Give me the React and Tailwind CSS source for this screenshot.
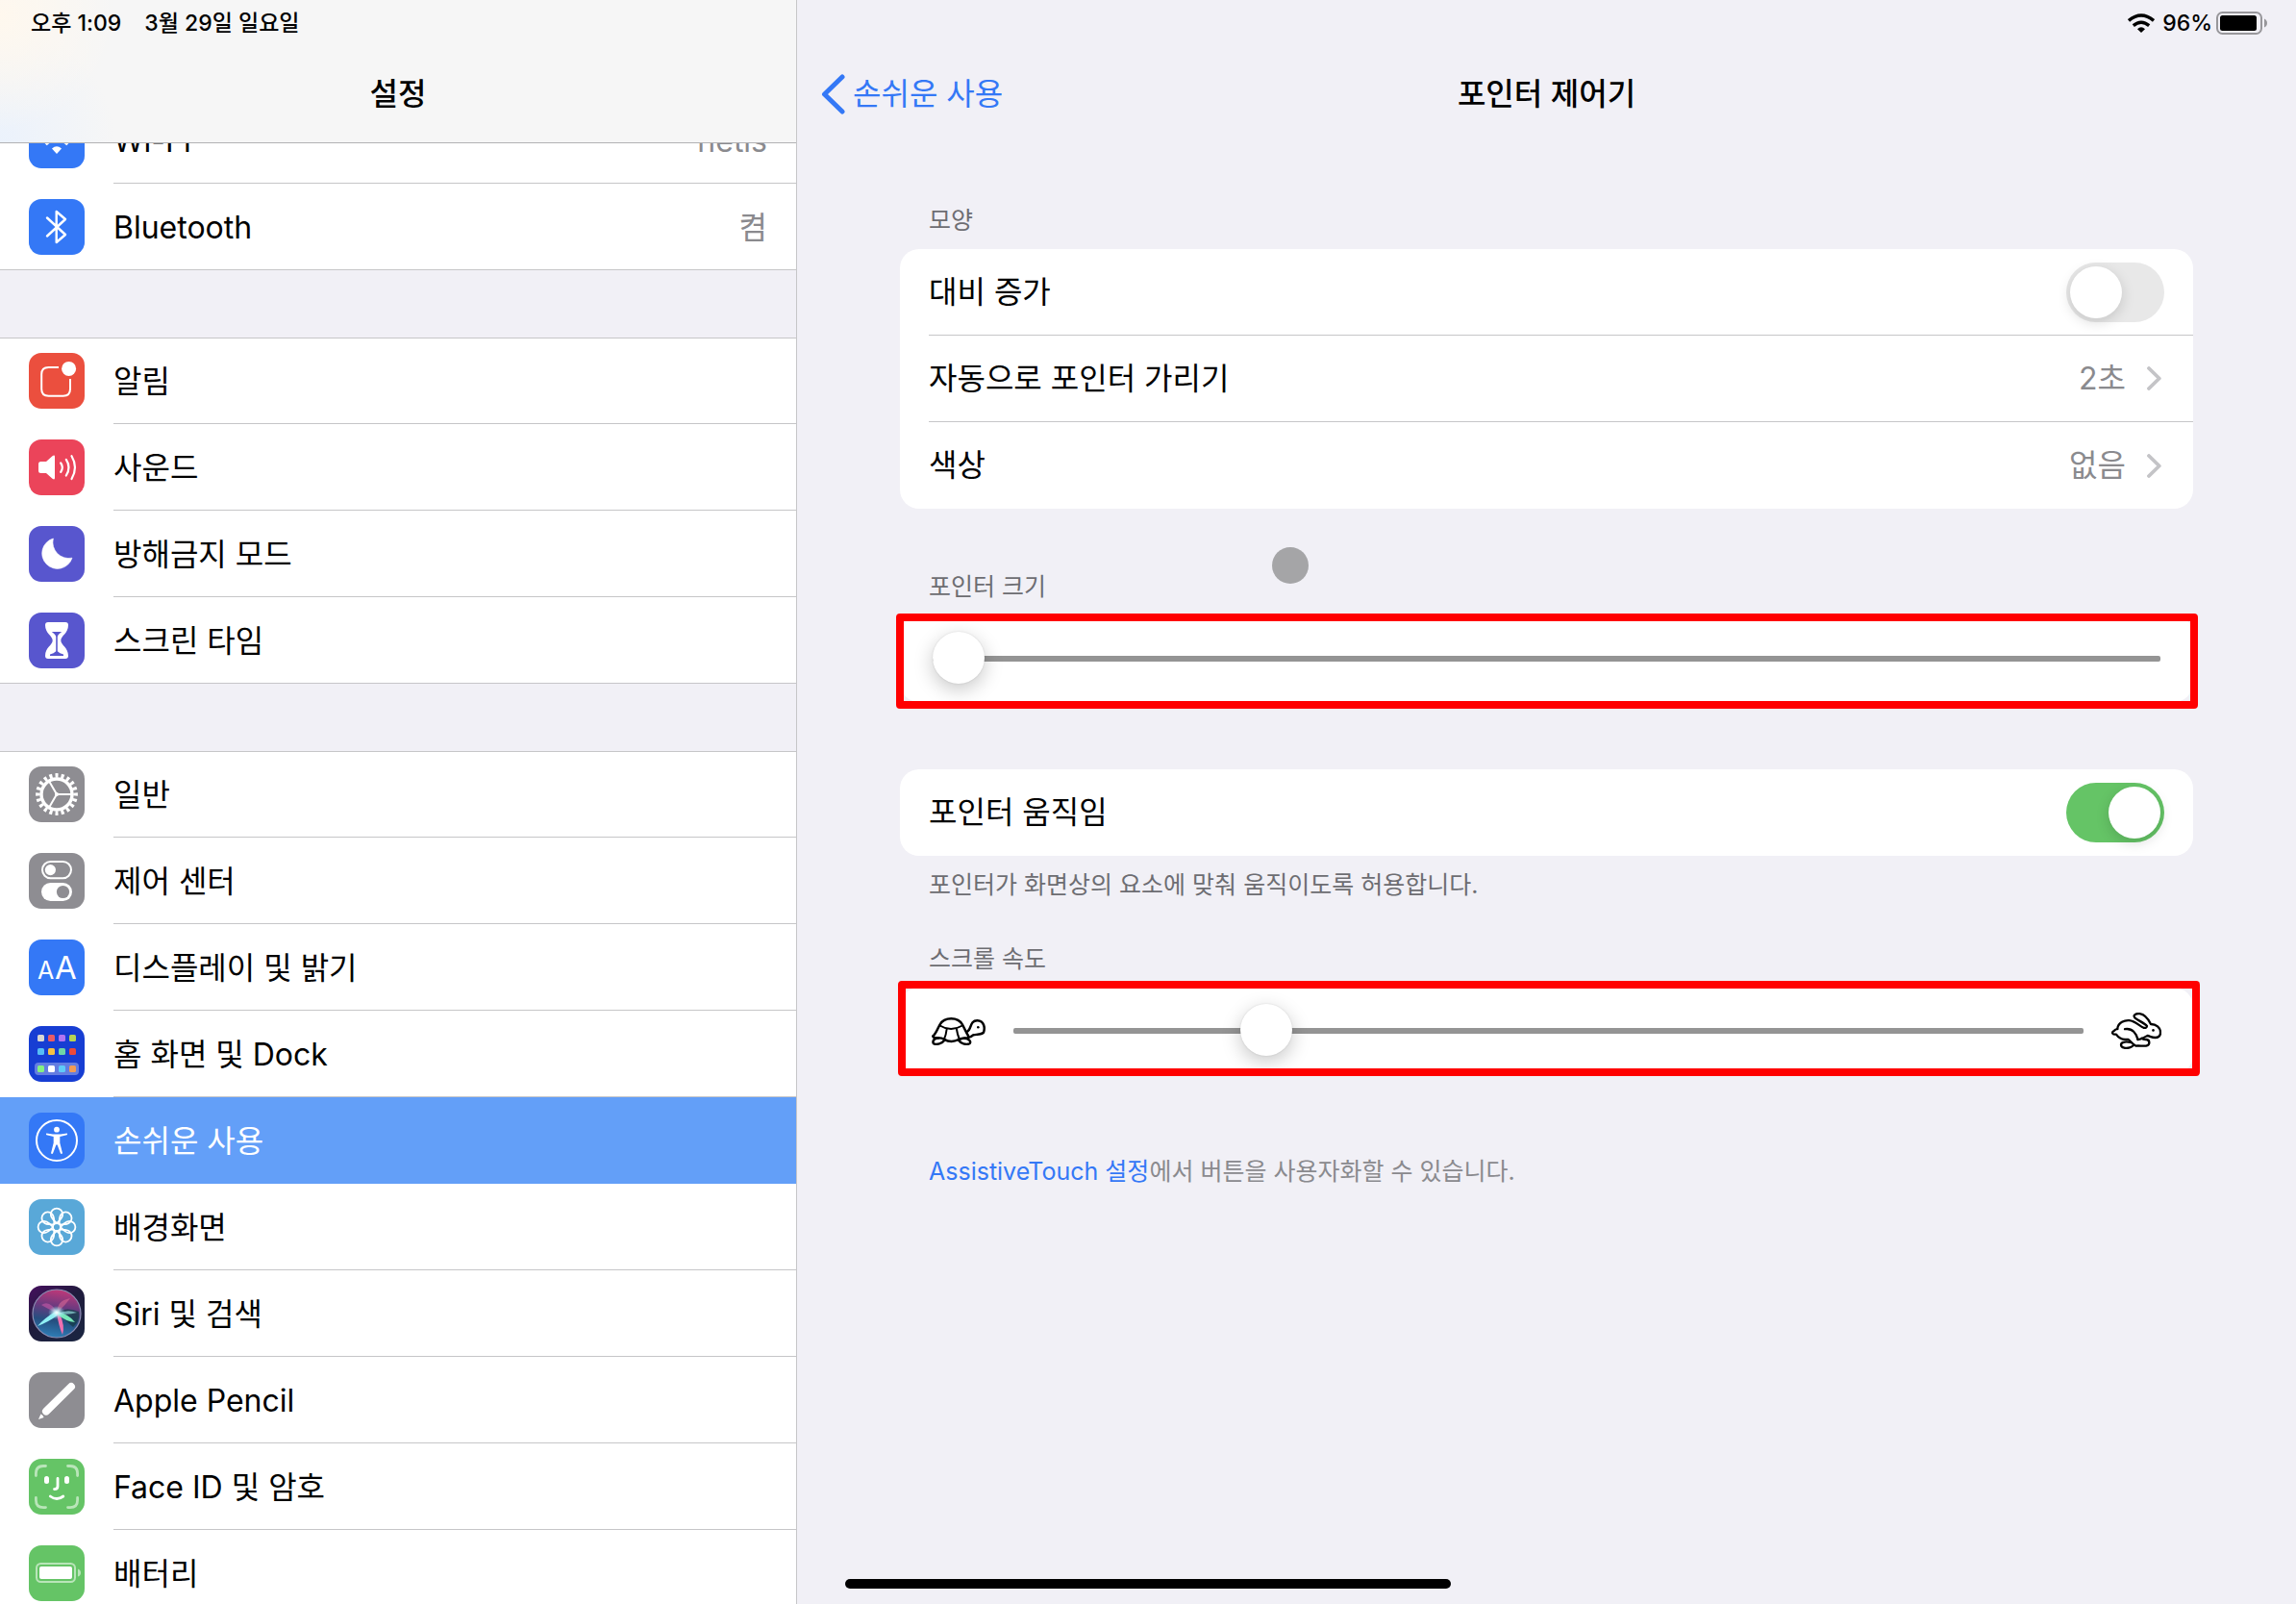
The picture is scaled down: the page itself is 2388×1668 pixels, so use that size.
import { useState } from "react";
import clsx from "clsx";

const IconTile = ({ color, children }) => (
  <svg viewBox="0 0 58 58" className="size-[58px] shrink-0" aria-hidden="true">
    <rect width="58" height="58" rx="13" fill={color} />
    {children}
  </svg>
);

const WifiIcon = () => (
  <IconTile color="#3478f6">
    <g fill="none" stroke="#fff" strokeWidth="3.6">
      <path d="M10 24Q29 7 48 24" />
      <path d="M17.5 33Q29 22 40.5 33" />
    </g>
    <path d="M29 43L24 37.5Q29 33 34 37.5Z" fill="#fff" />
  </IconTile>
);

const BluetoothIcon = () => (
  <IconTile color="#3478f6">
    <path d="M19 19.5L38 37L28.7 45V13L38 21L19 38.5" fill="none" stroke="#fff" strokeWidth="2.4" strokeLinecap="round" strokeLinejoin="round" />
  </IconTile>
);

const NotificationIcon = () => (
  <IconTile color="#eb4f3e">
    <path d="M31 15H20.5Q13.2 15 13.2 22.2V37.5Q13.2 44.7 20.5 44.7H35.8Q43 44.7 43 37.5V27" fill="none" stroke="#fff" strokeWidth="2" />
    <circle cx="41.6" cy="16.4" r="7.5" fill="#fff" />
  </IconTile>
);

const SoundIcon = () => (
  <IconTile color="#eb445a">
    <path d="M12.5 23H18L24.5 17.2Q27 15.5 27 18V40Q27 42.5 24.5 40.8L18 35H12.5Q10 35 10 32.5V25.5Q10 23 12.5 23Z" fill="#fff" />
    <g fill="none" stroke="#fff" strokeWidth="2.2" strokeLinecap="round">
      <path d="M33.2 24.5Q36.5 29 33.2 33.8" />
      <path d="M38.8 20.8Q44.2 29 38.8 37.5" />
      <path d="M44.5 17.2Q51.5 29 44.5 41" />
    </g>
  </IconTile>
);

const MoonIcon = () => (
  <IconTile color="#5856ce">
    <path d="M25.4 13A16 16 0 1 0 45 33.2A16.6 16.6 0 0 1 25.4 13Z" fill="#fff" stroke="#fff" strokeWidth=".6" strokeLinejoin="round" />
  </IconTile>
);

const HourglassIcon = () => (
  <IconTile color="#5856ce">
    <path d="M20 10H38Q41 10 41 13C41 22 33.3 24 33.3 29S41 36 41 45Q41 48 38 48H20Q17 48 17 45C17 36 24.7 34 24.7 29S17 22 17 13Q17 10 20 10Z" fill="#fff" />
    <path d="M23.8 20H34.2Q30 23 29.8 25V40.2Q32 42.5 36 43.5V45H22V43.5Q26 42.5 28.2 40.2V25Q28 23 23.8 20Z" fill="#5856ce" />
  </IconTile>
);

const GearIcon = () => (
  <IconTile color="#8e8d92">
    <g fill="none" stroke="#fff">
      <circle cx="29" cy="29" r="16" strokeWidth="3.4" />
      <circle cx="29" cy="29" r="19.6" strokeWidth="4.6" pathLength="200" strokeDasharray="5 5" strokeDashoffset="2.5" />
      <path d="M29 29H45M29 29L21 15.2M29 29L21 42.8" strokeWidth="2" />
    </g>
    <circle cx="29" cy="29" r="2" fill="#fff" />
  </IconTile>
);

const ControlCenterIcon = () => (
  <IconTile color="#8e8d92">
    <rect x="14" y="9" width="30" height="17.2" rx="8.6" fill="none" stroke="#fff" strokeWidth="2" />
    <circle cx="22.4" cy="17.6" r="5.6" fill="#fff" />
    <rect x="13" y="31" width="32" height="19" rx="9.5" fill="#fff" />
    <circle cx="35.5" cy="40.5" r="6.6" fill="#8e8d92" />
  </IconTile>
);

const DisplayIcon = () => (
  <IconTile color="#3478f6">
    <g fill="#fff" fontFamily="Inter, sans-serif">
      <text x="9" y="41" fontSize="25">A</text>
      <text x="27" y="41" fontSize="33">A</text>
    </g>
  </IconTile>
);

const appColors = [
  ["#d8d7d3", "#ea5b66", "#b174f2", "#b7d453"],
  ["#56bdf6", "#f6c143", "#70d6a6", "#ea4a3b"],
  ["#85f181", "#ffffff", "#5fcbf8", "#f09c55"],
];
const appRows = [9, 23, 41];

const HomeScreenIcon = () => (
  <IconTile color="#173ed3">
    <rect x="6" y="38" width="46" height="13" rx="4" fill="#fff" opacity=".33" />
    {appColors.map((row, r) =>
      row.map((fill, c) => <rect key={fill} x={9 + c * 11} y={appRows[r]} width="7" height="7" rx="1.6" fill={fill} />)
    )}
  </IconTile>
);

const AccessibilityIcon = () => (
  <IconTile color="#3478f6">
    <circle cx="29" cy="29" r="21" fill="none" stroke="#fff" strokeWidth="2" />
    <circle cx="29" cy="17.7" r="2.9" fill="#fff" />
    <path d="M18.2 21.4L25 22.6H33L39.8 21.4Q40.5 22.6 39.6 23.2L32.3 24.9V31.5L35 42.2Q34 43.5 33 42.6L29.6 33.5H28.4L25 42.6Q24 43.5 23 42.2L25.7 31.5V24.9L18.4 23.2Q17.5 22.6 18.2 21.4Z" fill="#fff" />
  </IconTile>
);

const petals = [0, 45, 90, 135, 180, 225, 270, 315];

const WallpaperIcon = () => (
  <IconTile color="#59a8d8">
    <g fill="none" stroke="#fff" strokeWidth="1.8">
      {petals.map((angle) => (
        <path key={angle} d="M29 25C25.5 22 22.8 19 22.8 15.8A6.2 6.2 0 0 1 35.2 15.8C35.2 19 32.5 22 29 25Z" transform={`rotate(${angle} 29 29)`} />
      ))}
      <circle cx="29" cy="29" r="4" />
    </g>
  </IconTile>
);

const SiriIcon = () => (
  <IconTile color="url(#siri-bg)">
    <defs>
      <linearGradient id="siri-bg" x1="0" y1="0" x2=".7" y2="1">
        <stop offset="0" stopColor="#47105f" />
        <stop offset=".5" stopColor="#1f1b3c" />
        <stop offset="1" stopColor="#1b2440" />
      </linearGradient>
      <linearGradient id="siri-orb" x1=".55" y1="0" x2=".4" y2="1">
        <stop offset="0" stopColor="#c03878" />
        <stop offset=".35" stopColor="#6b3a80" />
        <stop offset=".65" stopColor="#254f80" />
        <stop offset="1" stopColor="#2f7fb8" />
      </linearGradient>
      <radialGradient id="siri-glow">
        <stop offset="0" stopColor="#fff" />
        <stop offset=".35" stopColor="#c8f4fa" stopOpacity=".8" />
        <stop offset="1" stopColor="#7fe0e8" stopOpacity="0" />
      </radialGradient>
    </defs>
    <circle cx="29" cy="29" r="25" fill="url(#siri-orb)" stroke="#8d8fb5" strokeWidth="1.2" />
    <path d="M30 27Q40 22 52 27Q54 36 46 43Q38 36 30 29Z" fill="#143c48" opacity=".75" />
    <path d="M30 29Q16 22 13 20Q22 14 30 29Z" fill="#c85aa8" opacity=".6" />
    <path d="M30 28Q28 16 43 13Q38 20 30 28Z" fill="#e8709a" opacity=".5" />
    <path d="M29 26Q17 33 9 42Q20 38 31 30Z" fill="#8ff0f5" />
    <path d="M29 28Q31 42 35 51Q38 42 32 29Z" fill="#f070b0" />
    <path d="M30 27Q42 30 48 38Q38 37 30 30Z" fill="#76e8b8" />
    <path d="M30 29Q40 24 50 28Q40 31 30 29Z" fill="#8fd8d8" opacity=".7" />
    <ellipse cx="29" cy="28" rx="9" ry="7" fill="url(#siri-glow)" />
  </IconTile>
);

const PencilIcon = () => (
  <IconTile color="#8e8d92">
    <path d="M18 40.6L44 15" stroke="#fff" strokeWidth="8" strokeLinecap="round" />
    <path d="M10 49L12.4 43.6Q14.8 44.4 15.6 47Z" fill="#fff" />
  </IconTile>
);

const FaceIdIcon = () => (
  <IconTile color="#65c466">
    <g fill="none" strokeWidth="2.8" strokeLinecap="round">
      <path d="M7.4 17.5V15Q7.4 7.5 15 7.5H17.5M40.5 7.5H43Q50.6 7.5 50.6 15V17.5M50.6 40.5V43Q50.6 50.6 43 50.6H40.5M17.5 50.6H15Q7.4 50.6 7.4 43V40.5" stroke="#b9e5b9" />
      <path d="M30 20.5V28.5Q30 31.6 26.5 31.6M22.3 39Q29 44 35.8 39" stroke="#fff" />
    </g>
    <rect x="16" y="18" width="5" height="8" rx="2.5" fill="#fff" />
    <rect x="37" y="18" width="5" height="8" rx="2.5" fill="#fff" />
  </IconTile>
);

const BatteryIcon = () => (
  <IconTile color="#65c466">
    <rect x="8" y="19" width="40" height="19" rx="4.5" fill="none" stroke="#b9e5b9" strokeWidth="2" />
    <rect x="11" y="22" width="34" height="13" rx="2" fill="#fff" />
    <path d="M51 24.5Q54 25.5 54 28.5T51 32.5Z" fill="#b9e5b9" />
  </IconTile>
);

const TurtleIcon = () => (
  <svg viewBox="0 0 56 29" className="h-[29px] w-14 shrink-0" fill="none" stroke="#000" strokeWidth="2.5" strokeLinecap="round" strokeLinejoin="round" aria-hidden="true">
    <path d="M1.5 19.5C5 16 6.5 11 8.5 7.5C11 3 15 1.3 20.3 1.3S29.5 3 32 7.5C34 11 35.5 15 38 19" />
    <path d="M8.5 8.5Q20 15.5 32 8.5M15.6 12.5Q15 18 13 22.5M26 12.5Q26.8 18 28.8 22.5" strokeWidth="2" />
    <path d="M1.5 19.5Q1.5 21.5 5 21.3Q10 20.8 13 22.8Q20.3 27 28 23Q32 21.2 37 21.2Q41 20.8 43.5 18.2C48 17.6 52 17.8 54 15.6C55.5 11.5 55 3.5 47.5 3.2C39.5 3 41.5 12.5 37.3 14.5" />
    <path d="M7 21.5C3.5 21.5 1.3 23.5 1.4 26C1.5 28.2 5 28.2 8 27.4C11 26.6 12.5 25 13.5 23.6" />
    <path d="M34 21.8C38 21.8 40.3 24 40.2 26C40 28.2 36 28.2 33 27.4C30 26.6 28.8 25 27.8 23.6" />
    <circle cx="48.3" cy="10.2" r="1.3" fill="#000" stroke="none" />
  </svg>
);

const RabbitIcon = () => (
  <svg viewBox="0 0 52 38" className="h-[38px] w-[52px] shrink-0" fill="none" stroke="#000" strokeWidth="2.3" strokeLinecap="round" strokeLinejoin="round" aria-hidden="true">
    <path d="M6.2 17C7 10 14 7.8 18.5 8.2C24.5 8.6 28.5 13.5 33.5 15.8Q36.5 16.5 37 14C34 10.2 27 8.2 24.5 5.5C21.5 2 26.5 .8 29.5 1.2C35 2 38.5 7 41 12C46.5 12 51 15.5 51 20.5C51.3 24.5 48.5 26 45.5 26C42 26 40 24.5 37.5 24C34 25.5 31.5 28 27.5 28" />
    <path d="M6.2 17Q4 17.5 3 18.8Q.5 20.2 1.3 21.6Q2.2 23 5 22.6C7 25.5 10 28 14.5 27.9H17.5C20.5 30 22 33.5 25.5 34.6C29 34.2 32.5 35 36 34.6C40.5 34 40.3 28.6 36.5 28Q33 28.2 31.5 26.6" />
    <path d="M14 17.2C22 15.8 26 22 27.5 28" />
    <path d="M20 31C16.5 30 10 30 10 33.5C10 37 16 37.4 19 36.4Q21.5 35.6 23 34" />
    <circle cx="43.5" cy="18.4" r="1.3" fill="#000" stroke="none" />
  </svg>
);

const Chevron = () => (
  <svg viewBox="0 0 15 25" className="h-[25px] w-[15px] shrink-0" fill="none" stroke="#c4c4c7" strokeWidth="3.8" strokeLinecap="round" strokeLinejoin="round" aria-hidden="true">
    <path d="M2 2L12.8 12.5L2 23" />
  </svg>
);

const groups = [
  [
    { label: "Wi-Fi", icon: WifiIcon, value: "netis" },
    { label: "Bluetooth", icon: BluetoothIcon, value: "켬" },
  ],
  [
    { label: "알림", icon: NotificationIcon },
    { label: "사운드", icon: SoundIcon },
    { label: "방해금지 모드", icon: MoonIcon },
    { label: "스크린 타임", icon: HourglassIcon },
  ],
  [
    { label: "일반", icon: GearIcon },
    { label: "제어 센터", icon: ControlCenterIcon },
    { label: "디스플레이 및 밝기", icon: DisplayIcon },
    { label: "홈 화면 및 Dock", icon: HomeScreenIcon },
    { label: "손쉬운 사용", icon: AccessibilityIcon, active: true },
    { label: "배경화면", icon: WallpaperIcon },
    { label: "Siri 및 검색", icon: SiriIcon },
    { label: "Apple Pencil", icon: PencilIcon },
    { label: "Face ID 및 암호", icon: FaceIdIcon },
    { label: "배터리", icon: BatteryIcon },
  ],
];

const MenuItem = ({ item, last }) => {
  const Icon = item.icon;
  return (
    <li>
      <a
        href="#"
        aria-current={item.active ? "page" : undefined}
        className={clsx("flex h-[90px] items-center gap-[30px] pl-[30px]", item.active && "bg-[#639ff8] text-white")}
      >
        <Icon />
        <span className={clsx("flex h-full flex-1 items-center justify-between pt-0.5 pr-[30px]", !last && !item.active && "border-b border-[#c6c6c8]")}>
          <span>{item.label}</span>
          {item.value && <span className="text-[#8a8a8e]">{item.value}</span>}
        </span>
      </a>
    </li>
  );
};

const Sidebar = () => (
  <aside className="flex w-[829px] shrink-0 flex-col overflow-hidden border-r border-[#c6c6c8]">
    <header className="z-10 shrink-0 border-b border-[#b2b2b4] bg-[#f6f6f6] bg-[radial-gradient(circle_at_0_10%,#fff8ee_0,#fff8ee00_120px),radial-gradient(circle_at_0_100%,#ebf2fc_0,#ebf2fc00_120px)]">
      <div className="flex h-12 items-center gap-6 pl-8 text-[23px] leading-8 font-medium">
        <span>오후 1:09</span>
        <span>3월 29일 일요일</span>
      </div>
      <h1 className="flex h-[100px] items-center justify-center font-medium">설정</h1>
    </header>
    <nav className="min-h-0 flex-1 overflow-hidden">
      {/* list is scrolled part way under the header */}
      <div className="-mt-12 flex flex-col gap-[70px]">
        {groups.map((group) => (
          <ul key={group[0].label} className="bg-white shadow-[inset_0_1px_#c6c6c8,inset_0_-1px_#c6c6c8]">
            {group.map((item, i) => (
              <MenuItem key={item.label} item={item} last={i === group.length - 1} />
            ))}
          </ul>
        ))}
      </div>
    </nav>
  </aside>
);

const Switch = ({ id, checked, onChange }) => (
  <input
    id={id}
    type="checkbox"
    role="switch"
    checked={checked}
    onChange={(e) => onChange(e.target.checked)}
    className="h-[62px] w-[102px] appearance-none rounded-full bg-[#e8e8e8] p-1 before:block before:size-[54px] before:rounded-full before:bg-white before:shadow-[0_4px_14px_#00000026] checked:bg-[#65c466] checked:before:ml-10"
  />
);

const Slider = ({ label, value, onChange }) => (
  <input
    type="range"
    aria-label={label}
    step="any"
    value={value}
    onChange={(e) => onChange(e.target.value)}
    className="h-[54px] min-w-0 flex-1 appearance-none bg-transparent [&::-webkit-slider-runnable-track]:h-1.5 [&::-webkit-slider-runnable-track]:rounded-xs [&::-webkit-slider-runnable-track]:bg-[#949494] [&::-webkit-slider-thumb]:-mt-[25px] [&::-webkit-slider-thumb]:size-[54px] [&::-webkit-slider-thumb]:appearance-none [&::-webkit-slider-thumb]:rounded-full [&::-webkit-slider-thumb]:bg-white [&::-webkit-slider-thumb]:shadow-[0_6px_20px_#00000038,0_0_2px_#00000020]"
  />
);

const Card = ({ className, children }) => (
  <div className={clsx("relative rounded-[20px] bg-white", className)}>{children}</div>
);

const SectionLabel = ({ className, children }) => (
  <h3 className={clsx("mb-[14px] pl-[30px] text-[25px] leading-8 text-[#6d6d72]", className)}>{children}</h3>
);

const LinkRow = ({ label, value, last }) => (
  <button type="button" className="flex h-[90px] w-full pl-[30px] text-left">
    <span className={clsx("flex h-full flex-1 items-center pr-[33px]", !last && "border-b border-[#c6c6c8]")}>
      <span className="flex-1">{label}</span>
      <span className="mr-[22px] text-[#8a8a8e]">{value}</span>
      <Chevron />
    </span>
  </button>
);

const StatusIcons = () => (
  <div className="flex h-12 items-center justify-end pr-[30px] text-[23px] leading-8 font-medium">
    <svg viewBox="0 0 28 20" className="mr-2 h-5 w-7" aria-label="Wi-Fi">
      <g fill="none" stroke="#000" strokeWidth="3.4">
        <path d="M1 7.4Q14 -3.6 27 7.4" />
        <path d="M5.8 12.6Q14 5.8 22.2 12.6" />
      </g>
      <path d="M14 20L10 16.2Q14 12.4 18 16.2Z" />
    </svg>
    <span>96%</span>
    <svg viewBox="0 0 53 24" className="ml-1 h-6 w-[53px]" aria-label="배터리">
      <rect x="1" y="1" width="46" height="22" rx="5.5" fill="none" stroke="#98979b" strokeWidth="2" />
      <rect x="4" y="4" width="38" height="16" rx="2.5" />
      <path d="M50 7.5Q53 9 53 12T50 16.5Z" fill="#98979b" />
    </svg>
  </div>
);

const PointerControl = () => {
  const [contrast, setContrast] = useState(false);
  const [motion, setMotion] = useState(true);
  const [size, setSize] = useState(0);
  const [speed, setSpeed] = useState(22.3);

  return (
    <main className="relative flex min-w-0 flex-1 flex-col">
      <header className="shrink-0">
        <StatusIcons />
        <div className="grid h-[100px] grid-cols-[1fr_auto_1fr] items-center px-[25px]">
          <a href="#" className="flex items-center gap-2 text-[#3478f6]">
            <svg viewBox="0 0 25 42" className="h-[42px] w-[25px]" fill="none" stroke="currentColor" strokeWidth="5" strokeLinecap="round" strokeLinejoin="round" aria-hidden="true">
              <path d="M22 3L3.5 21L22 39" />
            </svg>
            손쉬운 사용
          </a>
          <h2 className="font-medium">포인터 제어기</h2>
        </div>
      </header>

      <div className="px-[107px] pt-[65px]">
        <SectionLabel>모양</SectionLabel>
        <Card>
          <div className="flex h-[90px] pl-[30px]">
            <div className="flex flex-1 items-center justify-between border-b border-[#c6c6c8] pr-[30px]">
              <label htmlFor="contrast">대비 증가</label>
              <Switch id="contrast" checked={contrast} onChange={setContrast} />
            </div>
          </div>
          <LinkRow label="자동으로 포인터 가리기" value="2초" />
          <LinkRow label="색상" value="없음" last />
        </Card>

        <SectionLabel className="mt-[65px]">포인터 크기</SectionLabel>
        <Card className="flex h-[90px] items-center px-[34px]">
          <Slider label="포인터 크기" value={size} onChange={setSize} />
          <span className="pointer-events-none absolute -top-0.5 -right-[5px] -bottom-[7px] -left-1 rounded border-8 border-[#ff0000]" />
        </Card>

        <Card className="mt-[70px] flex h-[90px] items-center justify-between px-[30px]">
          <label htmlFor="motion">포인터 움직임</label>
          <Switch id="motion" checked={motion} onChange={setMotion} />
        </Card>
        <p className="mt-[14px] pl-[30px] text-[25px] leading-8 text-[#6d6d72]">포인터가 화면상의 요소에 맞춰 움직이도록 허용합니다.</p>

        <SectionLabel className="mt-[45px]">스크롤 속도</SectionLabel>
        <Card className="flex h-[90px] items-center gap-[29px] px-[33px]">
          <TurtleIcon />
          <Slider label="스크롤 속도" value={speed} onChange={setSpeed} />
          <RabbitIcon />
          <span className="pointer-events-none absolute -top-[7px] -right-[7px] -bottom-0.5 -left-0.5 rounded border-8 border-[#ff0000]" />
        </Card>

        <p className="mt-[85px] pl-[30px] text-[25px] leading-8 text-[#8a8a8e]">
          <a href="#" className="text-[#3478f6]">AssistiveTouch 설정</a>에서 버튼을 사용자화할 수 있습니다.
        </p>
      </div>

      <span className="absolute top-[569px] left-[494px] size-[38px] rounded-full bg-[#a5a5a7]" />
    </main>
  );
};

const App = () => (
  <div className="relative flex h-screen overflow-hidden bg-[#f1f0f6] font-['Inter','Noto_Sans_CJK_KR',sans-serif] text-[32px] leading-10 text-black">
    <Sidebar />
    <PointerControl />
    <span className="absolute bottom-4 left-1/2 h-2.5 w-[630px] -translate-x-1/2 rounded-full bg-black" />
  </div>
);

export default App;
